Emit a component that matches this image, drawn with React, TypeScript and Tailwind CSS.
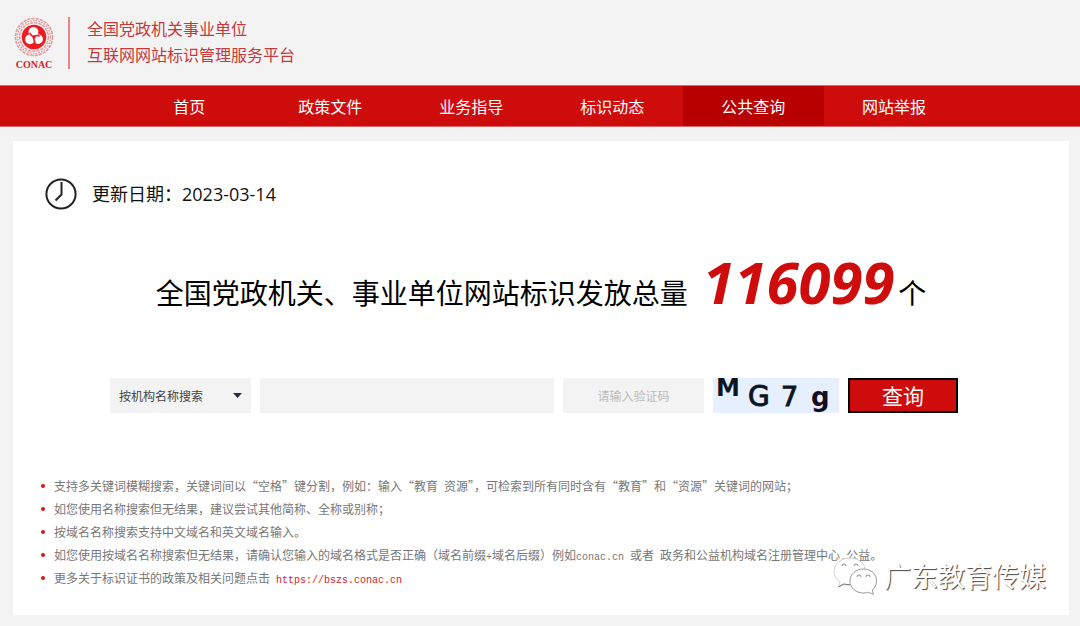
import React from 'react';

const navItems = [
  { label: '首页', active: false },
  { label: '政策文件', active: false },
  { label: '业务指导', active: false },
  { label: '标识动态', active: false },
  { label: '公共查询', active: true },
  { label: '网站举报', active: false },
];

const Latin = ({ children }: { children: React.ReactNode }) => (
  <span className="font-['Liberation_Mono',monospace] text-[10px] leading-none">{children}</span>
);

const Logo = () => (
  <svg width="40" height="52" viewBox="0 0 40 52" role="img" aria-label="CONAC">
    <g fill="none" stroke="#e29a9b">
      <circle cx="20" cy="20" r="18.5" strokeWidth="1.6" strokeDasharray="3.2 1" />
      <circle cx="20" cy="20" r="16.4" strokeWidth="1.4" strokeDasharray="1.6 1.2" />
      <circle cx="20" cy="20" r="14.3" strokeWidth="1.4" strokeDasharray="3.2 1" />
    </g>
    <circle cx="20" cy="20" r="12.3" fill="#ed1c24" />
    <circle cx="19.5" cy="15" r="4.9" fill="#fff" />
    <circle cx="15.9" cy="22.4" r="4.8" fill="#fff" />
    <circle cx="24.1" cy="22.2" r="4.8" fill="#fff" />
    <path d="M20.2 19.6Q22.8 17.6 25.6 19.2M20 20Q16.8 19 15.8 15.8M20.2 20Q19.2 23.4 21.2 26" fill="none" stroke="#ed1c24" strokeWidth="1.6" />
    <circle cx="20" cy="20" r="1.8" fill="#ed1c24" />
    <text x="20" y="51" textAnchor="middle" fontSize="10" fontWeight="700" fill="#d8232a" fontFamily="'Liberation Serif', serif">
      CONAC
    </text>
  </svg>
);

const Header = () => (
  <header className="flex h-[85px] items-center pl-[14px]">
    <Logo />
    <div className="ml-[14px] h-[52px] w-[2px] bg-[#ee8286]"></div>
    <div className="ml-[17px] pb-[3px] text-base leading-[26px] text-[#c5383b]">
      <p>全国党政机关事业单位</p>
      <p>互联网网站标识管理服务平台</p>
    </div>
  </header>
);

const Nav = () => (
  <nav className="border-y border-[#de6b6b] bg-[#ce0c0c] pl-[11%]">
    <ul className="flex w-[88%]">
      {navItems.map((item) => (
        <li key={item.label} className="flex-1">
          <a
            href="#"
            className={`block h-10 text-center text-base leading-10 text-white ${item.active ? 'bg-[#b90000]' : ''}`}
          >
            {item.label}
          </a>
        </li>
      ))}
    </ul>
  </nav>
);

const Captcha = () => (
  <svg className="shrink-0 overflow-visible bg-[#e6effd]" width="126" height="35" viewBox="0 0 126 35" role="img" aria-label="验证码">
    <g fontFamily="'DejaVu Sans', sans-serif" fill="#0b1720">
      <text x="3" y="18" fontSize="24" fontWeight="700">M</text>
      <text x="35" y="28" fontSize="28" stroke="#0b1720" strokeWidth="1">G</text>
      <text x="68" y="28" fontSize="27" stroke="#0b1720" strokeWidth="1">7</text>
      <text x="98" y="28" fontSize="26" fontWeight="700" fill="#160b26">g</text>
    </g>
  </svg>
);

const SearchForm = () => (
  <form className="mt-12 flex h-[35px] gap-[9px] pr-[111px] pl-[97px]" onSubmit={(e) => e.preventDefault()}>
    <div className="relative w-[141px] shrink-0">
      <select
        aria-label="搜索方式"
        className="h-full w-full appearance-none bg-[#f3f3f3] pl-[9px] text-xs text-[#444]"
      >
        <option>按机构名称搜索</option>
        <option>按域名名称搜索</option>
      </select>
      <svg className="pointer-events-none absolute top-[15px] right-[9px]" width="9" height="5" viewBox="0 0 9 5">
        <path d="M0 0H9L4.5 5Z" fill="#2c2c48" />
      </svg>
    </div>
    <input type="text" aria-label="关键词" className="min-w-0 flex-1 bg-[#f3f3f3] px-2 text-xs" />
    <input
      type="text"
      aria-label="验证码"
      placeholder="请输入验证码"
      className="w-[141px] shrink-0 bg-[#f3f3f3] text-center text-xs placeholder:text-[#bbb]"
    />
    <Captcha />
    <button type="submit" className="w-[110px] shrink-0 border-2 border-black bg-[#ce0c0c] text-[21px] leading-[31px] text-white">
      查询
    </button>
  </form>
);

const tips: React.ReactNode[] = [
  <>支持多关键词模糊搜索，关键词间以“空格”键分割，例如：输入“教育<Latin> </Latin>资源”，可检索到所有同时含有“教育”和“资源”关键词的网站；</>,
  <>如您使用名称搜索但无结果，建议尝试其他简称、全称或别称；</>,
  <>按域名名称搜索支持中文域名和英文域名输入。</>,
  <>
    如您使用按域名名称搜索但无结果，请确认您输入的域名格式是否正确（域名前缀<Latin>+</Latin>域名后缀）例如
    <Latin>conac.cn </Latin>或者<Latin> </Latin>政务和公益机构域名注册管理中心<Latin>.</Latin>公益。
  </>,
  <>
    更多关于标识证书的政策及相关问题点击<Latin> </Latin>
    <a href="https://bszs.conac.cn" className="text-[#d9232a]"><Latin>https://bszs.conac.cn</Latin></a>
  </>,
];

const Tips = () => (
  <ul className="mt-[61px] pb-[26px] pl-7 text-xs text-[#777]">
    {tips.map((tip, index) => (
      <li key={index} className="flex min-h-[23px] items-center">
        <span className="mr-[9px] h-1 w-1 shrink-0 rounded-full bg-[#d9141a]"></span>
        <span>{tip}</span>
      </li>
    ))}
  </ul>
);

const Watermark = () => (
  <div className="pointer-events-none absolute right-[23px] bottom-5 flex items-center gap-[7px]">
    <svg width="44" height="38" viewBox="0 0 44 38" fill="#fff" stroke="#999" strokeWidth="1">
      <path d="M17 1C8 1 1 7 1 14.5c0 4.500 2.300 8 6 10.500L5.500 30l5.500-3c2 .5 4 .8 6 .8 9 0 15.500-6 15.500-13.300S26 1 17 1Z" stroke="#d0d0d0" />
      <path d="M5.500 30l5.500-3c2 .5 4 .8 6 .8" fill="none" stroke="#777" />
      <path d="M30.500 12C23 12 17 17 17 24s6 12 13.500 12c2 0 3.500-.3 5-.8l5 2.300-1.200-4.500C42 30.700 43.500 27.600 43.500 24c0-7-5.500-12-13-12Z" stroke="#999" />
      <g fill="none" stroke="#888">
        <path d="M9 9a2 2 0 0 1 4 0M21 9a2 2 0 0 1 4 0M24 20a2 2 0 0 1 4 0M33 20a2 2 0 0 1 4 0" />
      </g>
    </svg>
    <span className="text-[27px] leading-9 text-white [text-shadow:1px_1px_1px_#444]">广东教育传媒</span>
  </div>
);

const App = () => {
  return (
    <div className="min-h-screen bg-[#f3f3f3] pb-[11px] font-['Noto_Sans_CJK_SC',sans-serif]" lang="zh-CN">
      <Header />
      <Nav />
      <main className="relative mt-[14px] mr-[11px] ml-[13px] bg-white pt-9">
        <div className="flex items-center pl-8">
          <svg width="32" height="32" viewBox="0 0 32 32" fill="none" stroke="#222" strokeWidth="2">
            <circle cx="16" cy="16" r="14.600" />
            <path d="M16.500 4V16.500L10.500 22.500" />
          </svg>
          <p className="ml-[15px] text-lg leading-8 text-[#111]">
            更新日期：<span className="font-['Open_Sans',sans-serif]">2023-03-14</span>
          </p>
        </div>
        <h1 className="mt-[34px] flex items-baseline justify-center text-[28px] leading-[75px] text-black">
          全国党政机关、事业单位网站标识发放总量
          <span className="mr-1 ml-[15px] font-['Open_Sans',sans-serif] text-[58px] font-bold text-[#ce0c0c] italic">
            116099
          </span>
          个
        </h1>
        <SearchForm />
        <Tips />
        <Watermark />
      </main>
    </div>
  );
};

export default App;
